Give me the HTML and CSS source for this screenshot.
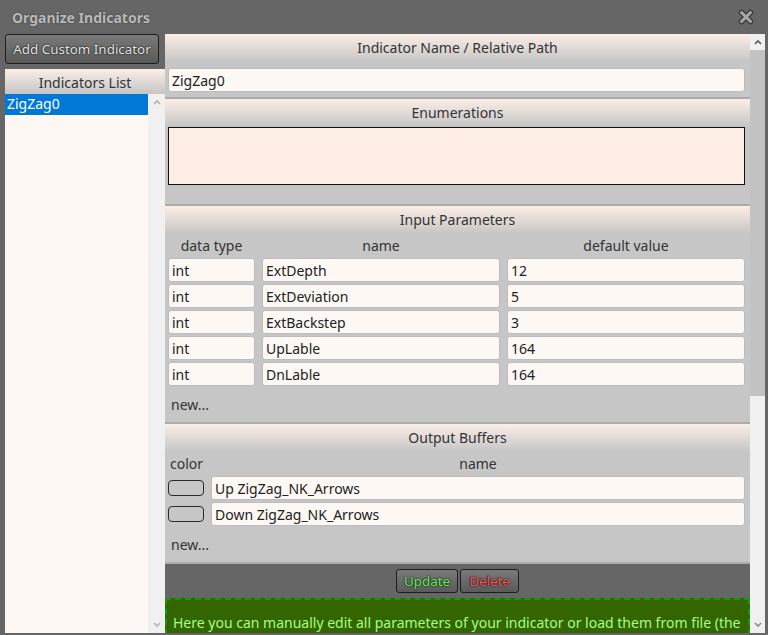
FILE: index.html
```html
<!DOCTYPE html>
<html lang="en">
<head>
  <meta charset="UTF-8" />
  <title>Organize Indicators</title>
  <link rel="stylesheet" href="styles.css">
</head>
<body>

<div class="dialog">
  <div class="titlebar">
    <span class="title">Organize Indicators</span>
    <svg class="close" width="16" height="16" viewBox="0 0 16 16">
      <path d="M3.5 3.5 L12.5 12.5 M12.5 3.5 L3.5 12.5" stroke="#3a3a3a" stroke-width="5.5" stroke-linecap="round" />
      <path d="M3.5 3.5 L12.5 12.5 M12.5 3.5 L3.5 12.5" stroke="#a8a8a8" stroke-width="3" stroke-linecap="round" />
    </svg>
  </div>

  <div class="main">
    <div class="sidebar">
      <button class="btn add-btn">Add Custom Indicator</button>
      <div class="list-panel">
        <div class="sec-head list-head">Indicators List</div>
        <div class="list-body">
          <div class="list-items">
            <div class="list-item selected">ZigZag0</div>
          </div>
          <div class="vscroll narrow">
            <svg class="arrow" width="10" height="8" viewBox="0 0 10 8"><polyline points="2,6 5,3 8,6" fill="none" stroke="#b4b4b4" stroke-width="1.6" /></svg>
            <div class="track"></div>
            <svg class="arrow" width="10" height="8" viewBox="0 0 10 8"><polyline points="2,2 5,5 8,2" fill="none" stroke="#b4b4b4" stroke-width="1.6" /></svg>
          </div>
        </div>
      </div>
    </div>

    <div class="content">
      <div class="pane">
        <section class="sec">
          <div class="sec-head">Indicator Name / Relative Path</div>
          <div class="sec-body name-body">
            <input class="field" type="text" value="ZigZag0">
          </div>
        </section>

        <section class="sec">
          <div class="sec-head">Enumerations</div>
          <div class="sec-body enum-body">
            <div class="enum-box"></div>
          </div>
        </section>

        <section class="sec">
          <div class="sec-head">Input Parameters</div>
          <div class="sec-body">
            <div class="param-row labels">
              <span>data type</span>
              <span>name</span>
              <span>default value</span>
            </div>
            <div class="param-row"><input class="field" value="int"><input class="field" value="ExtDepth"><input class="field" value="12"></div>
            <div class="param-row"><input class="field" value="int"><input class="field" value="ExtDeviation"><input class="field" value="5"></div>
            <div class="param-row"><input class="field" value="int"><input class="field" value="ExtBackstep"><input class="field" value="3"></div>
            <div class="param-row"><input class="field" value="int"><input class="field" value="UpLable"><input class="field" value="164"></div>
            <div class="param-row"><input class="field" value="int"><input class="field" value="DnLable"><input class="field" value="164"></div>
            <div class="new-link">new...</div>
          </div>
        </section>

        <section class="sec">
          <div class="sec-head">Output Buffers</div>
          <div class="sec-body">
            <div class="buf-row labels">
              <span class="color-label">color</span>
              <span>name</span>
            </div>
            <div class="buf-row"><span class="swatch"></span><input class="field" value="Up ZigZag_NK_Arrows"></div>
            <div class="buf-row"><span class="swatch"></span><input class="field" value="Down ZigZag_NK_Arrows"></div>
            <div class="new-link buf-new">new...</div>
          </div>
        </section>

        <div class="actions">
          <button class="btn act update">Update</button>
          <button class="btn act delete">Delete</button>
        </div>

        <div class="hint">
          Here you can manually edit all parameters of your indicator or load them from file (the source code of the indicator). The source code is never uploaded to the server and the parameters are read locally in your browser.
        </div>
      </div>

      <div class="vscroll">
        <svg class="arrow" width="10" height="8" viewBox="0 0 10 8"><polyline points="2,6 5,3 8,6" fill="none" stroke="#5a5a5a" stroke-width="1.6" /></svg>
        <div class="track"><div class="thumb"></div></div>
        <svg class="arrow" width="10" height="8" viewBox="0 0 10 8"><polyline points="2,2 5,5 8,2" fill="none" stroke="#8a8a8a" stroke-width="1.6" /></svg>
      </div>
    </div>
  </div>
</div>

</body>
</html>
```

FILE: styles.css
```css
* { box-sizing: border-box; }
body {
  margin: 0;
  font-family: 'Noto Sans', 'Open Sans', sans-serif;
  font-size: 14px;
  background: #666;
  color: #333;
  height: 635px;
  overflow: hidden;
}

.dialog {
  display: flex;
  flex-direction: column;
  height: 635px;
  padding: 0 3px 2px 5px;
}

.titlebar {
  height: 34px;
  flex: none;
  display: flex;
  align-items: center;
  justify-content: space-between;
  padding: 0 11px 0 7px;
}

.title {
  color: #b8b8b8;
  font-weight: bold;
  font-size: 14px;
  text-shadow: 0 0 2px #3c3c3c;
}

.close { display: block; }

.main {
  flex: 1;
  display: flex;
  min-height: 0;
}

/* left column */
.sidebar {
  width: 160px;
  flex: none;
  display: flex;
  flex-direction: column;
}

.btn {
  font-family: inherit;
  border: 1px solid #1e1e1e;
  border-radius: 3px;
  background: linear-gradient(#7a7a7a, #5a5a5a);
  cursor: pointer;
  text-shadow: 0 0 2px #111, 0 0 1px #222;
}

.add-btn {
  width: 154px;
  height: 30px;
  color: #e6e6e6;
  font-size: 13.4px;
  padding: 0;
}

.list-panel {
  margin-top: 5px;
  flex: 1;
  display: flex;
  flex-direction: column;
  min-height: 0;
}

.sec-head {
  height: 28px;
  line-height: 28px;
  text-align: center;
  color: #333;
  background: linear-gradient(#fbeee6, #c5c5c5);
}

.list-head { height: 25px; line-height: 27px; }

.list-body {
  flex: 1;
  display: flex;
  min-height: 0;
}

.list-items {
  flex: 1;
  background: #fdf8f4;
}

.list-item {
  height: 21px;
  line-height: 20px;
  padding-left: 2px;
}

.list-item.selected {
  background: #0078d7;
  color: #fff;
}

.vscroll {
  width: 15px;
  flex: none;
  display: flex;
  flex-direction: column;
  align-items: center;
  background: #f0f0f0;
}

.vscroll.narrow { width: 17px; }

.vscroll .arrow { flex: none; margin: 4px 0; }

.vscroll .track {
  flex: 1;
  align-self: stretch;
}

.thumb {
  height: 346px;
  background: #c2c2c2;
}

/* right column */
.content {
  flex: 1;
  display: flex;
  min-width: 0;
}

.pane {
  flex: 1;
  overflow: hidden;
  background: #c6c6c6;
}

.sec { border-bottom: 2px solid #ababab; }

.sec-body {
  padding: 0 5px 0 3px;
}

.name-body { padding-top: 6px; padding-bottom: 5px; }

.enum-body { padding-bottom: 19px; }

.enum-box {
  height: 58px;
  border: 1.5px solid #111;
  background: #ffeee6;
}

.field {
  display: block;
  width: 100%;
  height: 24px;
  font-family: inherit;
  font-size: 14px;
  color: #222;
  background: #fdf8f4;
  border: 1px solid #bcbcbc;
  border-radius: 3px;
  padding: 0 3px;
  outline: none;
}

.param-row {
  display: grid;
  grid-template-columns: 87px 238px 1fr;
  gap: 7px;
  margin-bottom: 2px;
}

.labels {
  height: 24px;
  line-height: 24px;
  text-align: center;
  margin-bottom: 0;
}

.new-link {
  height: 34px;
  line-height: 34px;
  padding-left: 3px;
}

.buf-row {
  display: grid;
  grid-template-columns: 36px 1fr;
  gap: 7px;
  align-items: center;
  margin-bottom: 2px;
}

.buf-row.labels { margin-bottom: 0; }

.color-label { text-align: left; padding-left: 2px; }

.swatch {
  height: 16px;
  border: 1px solid #2a2a2a;
  border-radius: 4px;
}

.buf-new { height: 34px; line-height: 34px; }

.actions {
  height: 34px;
  background: #666;
  display: flex;
  justify-content: center;
  align-items: center;
  gap: 2px;
}

.act {
  height: 24px;
  font-size: 13.4px;
  padding: 0 4px;
}

.update { color: #66ee55; width: 62px; }
.delete { color: #ff5050; width: 59px; }

.hint {
  background: #336600;
  border: 2px dashed #119911;
  color: #a6ff80;
  padding: 14px 6px 10px 6px;
  line-height: 17px;
}
```
